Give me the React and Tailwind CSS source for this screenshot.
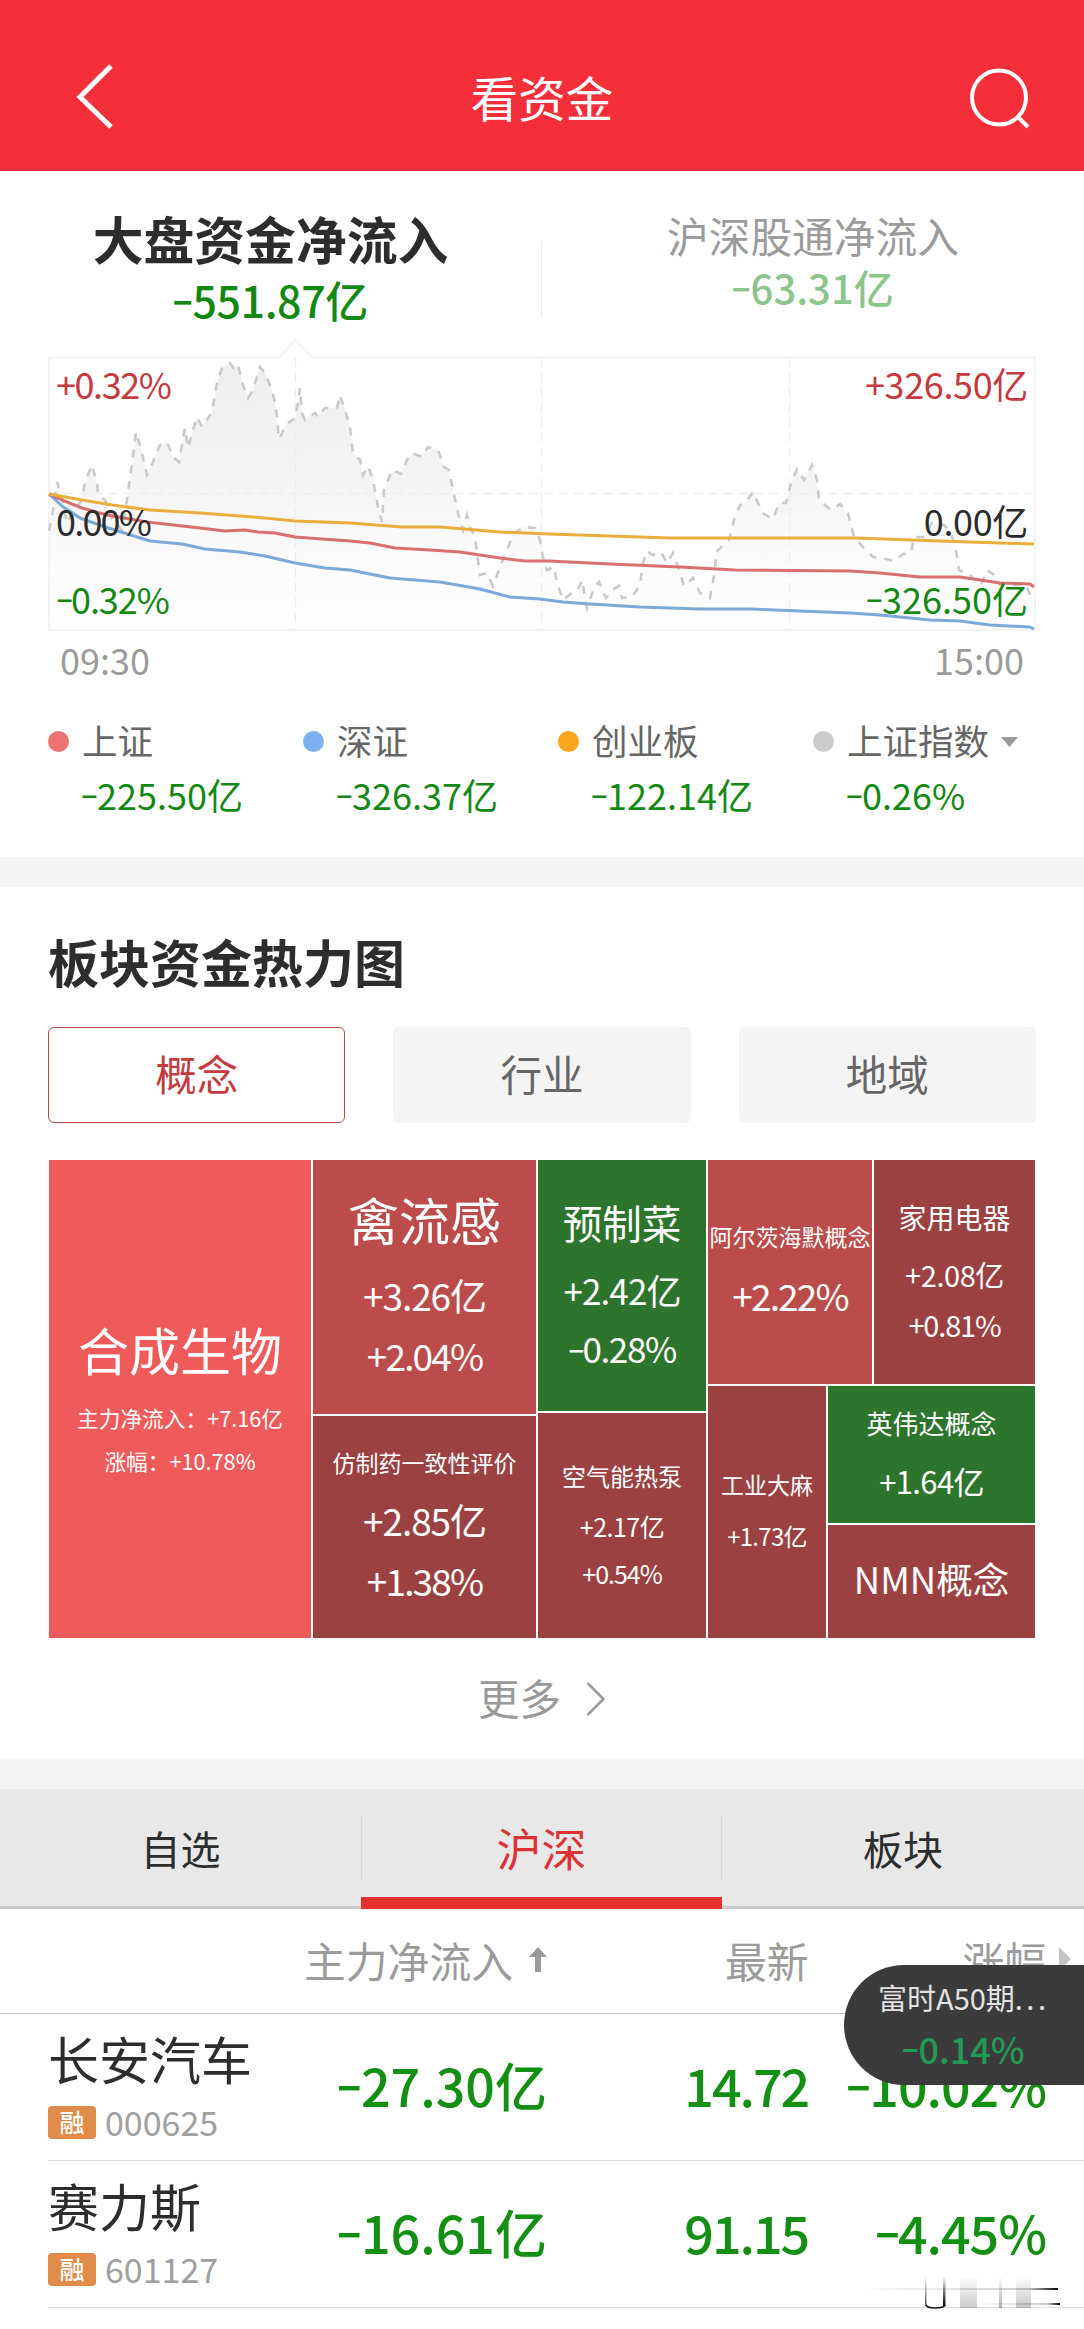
import { clsx } from "clsx";

const INDEX_LINE =
  "49,531 53,510 57,482 62,497 67,523 73,512 82,500 85,482 92,465 97,483 98,495 105,500 113,520 122,530 127,500 132,463 136,432 142,453 147,475 153,462 160,445 167,442 173,457 179,462 185,428 188,448 193,430 197,417 202,427 212,412 217,383 222,368 230,363 234,369 238,365 243,385 248,398 253,390 260,367 265,373 272,390 276,407 279,439 286,425 295,418 298,402 300,388 302,413 305,420 315,413 318,417 325,408 337,408 340,395 345,410 350,427 353,453 360,460 363,475 368,466 373,480 378,507 382,522 384,490 392,470 401,474 407,460 412,453 422,457 428,447 438,450 444,467 449,470 453,490 458,513 463,530 467,515 470,527 475,537 478,560 480,575 487,573 493,586 500,567 507,550 513,535 523,527 535,528 540,540 543,557 547,570 554,567 557,583 563,600 573,592 578,590 582,580 587,608 594,588 599,582 606,598 615,588 619,586 622,598 632,597 640,585 643,563 647,551 653,555 661,552 667,563 673,553 679,570 684,586 693,578 700,593 710,598 715,570 716,552 729,540 734,520 740,505 745,503 753,492 758,503 764,514 773,519 779,503 786,503 791,483 797,469 804,480 812,465 817,480 819,500 831,510 840,504 848,513 854,537 863,547 873,557 882,558 894,561 903,554 911,553 914,537 923,537 932,523 944,525 951,533 956,550 959,570 970,575 981,585 987,570 994,575 1000,585 1026,585 1033,602";

const YELLOW_LINE =
  "49,494 82,500 112,505 150,510 200,513 253,517 295,521 350,523 402,527 440,527 500,532 549,534 610,536 670,538 740,538 855,538 940,541 1000,543 1034,544";
const RED_LINE =
  "49,494 62,500 82,508 107,515 147,522 200,528 225,531 245,530 258,532 275,533 295,537 350,541 370,543 395,548 430,550 460,552 500,558 525,561 549,561 610,564 680,567 735,570 850,571 880,573 920,577 960,577 1000,583 1030,584 1034,587";
const BLUE_LINE =
  "49,494 62,506 80,518 105,527 150,541 182,544 205,549 240,552 265,556 295,563 325,568 350,570 390,578 440,582 480,589 510,597 540,599 563,602 590,604 640,607 700,609 750,609 800,611 850,613 880,615 930,620 960,621 990,625 1030,627 1034,629";

const legend = [
  { name: "上证", value: "-225.50亿", dot: "bg-[#ee7272]" },
  { name: "深证", value: "-326.37亿", dot: "bg-[#7cb0ee]" },
  { name: "创业板", value: "-122.14亿", dot: "bg-[#faa61e]" },
  { name: "上证指数", value: "-0.26%", dot: "bg-[#cccccc]", arrow: true },
];

const stocks = [
  { name: "长安汽车", code: "000625", flow: "-27.30亿", price: "14.72", change: "-10.02%" },
  { name: "赛力斯", code: "601127", flow: "-16.61亿", price: "91.15", change: "-4.45%" },
];

// Negative number with a wide minus, raised to the middle of the digits
function Neg({ children }) {
  return (
    <>
      <span className="mx-[0.05em] inline-block -translate-y-[0.07em] scale-x-150">-</span>
      {children.slice(1)}
    </>
  );
}

function Cell({ className, children }) {
  return (
    <div className={clsx("flex flex-col items-center justify-center whitespace-nowrap text-white", className)}>
      {children}
    </div>
  );
}

function FundChart() {
  return (
    <div className="relative ml-12 h-[296px] w-[988px]">
      <svg className="block" width="988" height="296" viewBox="48 336 988 296" fill="none">
        <defs>
          <linearGradient id="area" gradientUnits="userSpaceOnUse" x1="0" y1="360" x2="0" y2="630">
            <stop offset="0" stopColor="#eeeeee" />
            <stop offset="0.5" stopColor="#f5f5f5" />
            <stop offset="0.75" stopColor="#fbfbfb" />
            <stop offset="1" stopColor="#fefefe" />
          </linearGradient>
        </defs>
        <polygon points={`49,630 ${INDEX_LINE} 1033,630`} fill="url(#area)" />
        <path d="M49 357.500H279L295 340L312 357.500H1035V630H49Z" stroke="#f0f0f0" strokeWidth="1.500" />
        <path d="M49 493.500H1035M295.500 358V630M541.500 358V630M789.500 358V630" stroke="#ededed" strokeWidth="1.300" strokeDasharray="9 6" />
        <polyline points={INDEX_LINE} stroke="#cacaca" strokeWidth="2.600" strokeDasharray="8 8" />
        <polyline points={BLUE_LINE} stroke="#7ba9da" strokeWidth="3" strokeLinejoin="round" />
        <polyline points={RED_LINE} stroke="#d86f70" strokeWidth="3" strokeLinejoin="round" />
        <polyline points={YELLOW_LINE} stroke="#eaae3c" strokeWidth="3" strokeLinejoin="round" />
      </svg>
      <div className="absolute inset-x-2 top-[28px] flex justify-between text-[36px] leading-[38px] text-[#c53a40]">
        <span className="tracking-[-0.04em]">+0.32%</span>
        <span className="tracking-[-0.01em]">+326.50亿</span>
      </div>
      <div className="absolute inset-x-2 top-[165px] flex justify-between text-[36px] leading-[38px] text-[#2b2b2b]">
        <span className="tracking-[-0.05em]">0.00%</span>
        <span className="tracking-[-0.01em]">0.00亿</span>
      </div>
      <div className="absolute inset-x-2 top-[243px] flex justify-between text-[36px] leading-[38px] text-[#138913]">
        <span className="tracking-[-0.03em]"><Neg>-0.32%</Neg></span>
        <span><Neg>-326.50亿</Neg></span>
      </div>
    </div>
  );
}

function HeatMap() {
  return (
    <div className="mx-[49px] flex h-[478px] gap-[2px]">
      <Cell className="w-[262px] bg-[#ef5b5b] pb-[14px]">
        <div className="text-[51px] leading-[93px]">合成生物</div>
        <div className="text-[21.7px] leading-[43px]">主力净流入：+7.16亿</div>
        <div className="text-[21.7px] leading-[43px]">涨幅：+10.78%</div>
      </Cell>

      <div className="flex w-[223px] flex-col gap-[2px]">
        <Cell className="h-[254px] bg-[#bc4b4b] pb-4">
          <div className="text-[51px] leading-[92px]">禽流感</div>
          <div className="text-[37px] leading-[60px] tracking-[-0.03em]">+3.26亿</div>
          <div className="text-[37px] leading-[60px] tracking-[-0.05em]">+2.04%</div>
        </Cell>
        <Cell className="flex-1 bg-[#9c4141] pb-[10px]">
          <div className="text-[23px] leading-[56px]">仿制药一致性评价</div>
          <div className="text-[37px] leading-[60px] tracking-[-0.03em]">+2.85亿</div>
          <div className="text-[37px] leading-[60px] tracking-[-0.05em]">+1.38%</div>
        </Cell>
      </div>

      <div className="flex w-[168px] flex-col gap-[2px]">
        <Cell className="h-[251px] bg-[#2d752d] pb-[11px]">
          <div className="text-[39.5px] leading-[78px]">预制菜</div>
          <div className="text-[35px] leading-[58px] tracking-[-0.025em]">+2.42亿</div>
          <div className="text-[35px] leading-[58px] tracking-[-0.04em]"><Neg>-0.28%</Neg></div>
        </Cell>
        <Cell className="flex-1 bg-[#9c4141] pb-[7px]">
          <div className="text-[24px] leading-[55px]">空气能热泵</div>
          <div className="text-[25px] leading-[47px] tracking-[-0.02em]">+2.17亿</div>
          <div className="text-[25px] leading-[47px] tracking-[-0.04em]">+0.54%</div>
        </Cell>
      </div>

      <div className="flex flex-1 flex-col gap-[2px]">
        <div className="flex h-[224px] gap-[2px]">
          <Cell className="w-[164px] bg-[#bc4b4b] pb-3">
            <div className="text-[23px] leading-[59px]">阿尔茨海默概念</div>
            <div className="text-[37px] leading-[59px] tracking-[-0.05em]">+2.22%</div>
          </Cell>
          <Cell className="flex-1 bg-[#9c4141] pb-[10px]">
            <div className="text-[28px] leading-[64px]">家用电器</div>
            <div className="text-[29px] leading-[50px] tracking-[-0.015em]">+2.08亿</div>
            <div className="text-[29px] leading-[50px] tracking-[-0.04em]">+0.81%</div>
          </Cell>
        </div>
        <div className="flex flex-1 gap-[2px]">
          <Cell className="w-[118px] bg-[#9c4141] pb-1">
            <div className="text-[23px] leading-[51px]">工业大麻</div>
            <div className="text-[24px] leading-[51px] tracking-[-0.03em]">+1.73亿</div>
          </Cell>
          <div className="flex flex-1 flex-col gap-[2px]">
            <Cell className="h-[137px] bg-[#2d752d] pb-[6px]">
              <div className="text-[26px] leading-[58px]">英伟达概念</div>
              <div className="text-[31px] leading-[58px] tracking-[-0.02em]">+1.64亿</div>
            </Cell>
            <Cell className="flex-1 bg-[#9c4141] pb-[5px]">
              <div className="text-[36.5px] leading-none">NMN概念</div>
            </Cell>
          </div>
        </div>
      </div>
    </div>
  );
}

function StockRow({ stock }) {
  return (
    <div className="ml-12 flex h-[147px] border-b-[1.5px] border-[#dedede]">
      <div className="w-[264px] pt-[16px]">
        <div className="text-[51px] leading-[56px] text-[#2d2d2d]">{stock.name}</div>
        <div className="mt-[20px] flex h-[33px] items-center gap-[9px]">
          <span className="flex h-[33px] w-12 items-center justify-center rounded bg-[#e08b4a] pb-[2px] text-[25px] font-medium leading-none text-white">
            融
          </span>
          <span className="pb-[2px] text-[34px] leading-none text-[#a0a0a0]">{stock.code}</span>
        </div>
      </div>
      <div className="flex flex-1 pt-[43px] text-right text-[52px] font-medium leading-[56px] text-[#138f13]">
        <div className="w-[235px]"><Neg>{stock.flow}</Neg></div>
        <div className="w-[261px] tracking-[-0.04em]">{stock.price}</div>
        <div className="w-[238px] tracking-[-0.02em]"><Neg>{stock.change}</Neg></div>
      </div>
    </div>
  );
}

export default function App() {
  return (
    <div className="relative h-[2329px] w-[1084px] overflow-hidden bg-white font-['Noto_Sans_CJK_SC',sans-serif]">
      {/* Header */}
      <header className="flex h-[171px] items-start justify-between bg-[#f42f39] pl-[75px] pr-[53px] pt-[62px] text-white">
        <svg width="40" height="68" viewBox="0 0 40 68" fill="none" stroke="currentColor" strokeWidth="5">
          <path d="M36 4L5 35L36 65" />
        </svg>
        <h1 className="mt-[8px] text-[47.5px] leading-[54px]">看资金</h1>
        <svg width="62" height="68" viewBox="0 0 62 68" fill="none" stroke="currentColor" strokeWidth="4">
          <circle cx="30" cy="35.500" r="27" />
          <path d="M49 55L59 65" />
        </svg>
      </header>

      {/* Net inflow summary */}
      <section className="h-[686px]">
        <div className="flex h-[165px] items-start text-center">
          <div className="w-[541px] pt-[38px]">
            <div className="text-[50.8px] font-bold leading-[58px] text-[#2d2d2d]">大盘资金净流入</div>
            <div className="mt-[7px] text-[43px] font-medium leading-[50px] tracking-[-0.01em] text-[#138913]"><Neg>-551.87亿</Neg></div>
          </div>
          <div className="mt-[70px] h-[76px] w-px bg-[#ececec]" />
          <div className="flex-1 pt-[39px]">
            <div className="text-[41.7px] leading-[50px] text-[#9b9b9b]">沪深股通净流入</div>
            <div className="mt-[3px] text-[40px] font-medium leading-[48px] text-[#8cc58c]"><Neg>-63.31亿</Neg></div>
          </div>
        </div>
        <FundChart />
        <div className="mx-[60px] mt-[7px] flex justify-between text-[36px] leading-[40px] text-[#9b9b9b]">
          <span>09:30</span>
          <span>15:00</span>
        </div>
        <div className="ml-12 mt-[40px] grid grid-cols-[255px_255px_255px_1fr]">
          {legend.map((item) => (
            <div key={item.name}>
              <div className="flex items-center text-[35.5px] leading-[50px] text-[#666]">
                <i className={clsx("mr-[13px] size-[21px] -translate-y-px rounded-full", item.dot)} />
                <span className="-mt-1">{item.name}</span>
                {item.arrow && (
                  <svg className="ml-3" width="17" height="10" viewBox="0 0 17 10" fill="#999">
                    <path d="M0 0H17L8.500 10Z" />
                  </svg>
                )}
              </div>
              <div className="pl-[33px] pt-[4px] text-[36px] leading-[50px] text-[#138913]"><Neg>{item.value}</Neg></div>
            </div>
          ))}
        </div>
      </section>

      <div className="h-[30px] bg-[#f4f4f4]" />

      {/* Sector heat map */}
      <section className="h-[872px]">
        <h2 className="pl-12 pt-[45px] text-[51px] font-bold leading-[58px] text-[#2d2d2d]">板块资金热力图</h2>
        <div className="mx-12 mb-[37px] mt-[37px] grid h-24 grid-cols-3 gap-12 text-center text-[41.5px] leading-[90px]">
          <div className="rounded-md border-[1.5px] border-[#b9484c] text-[#c53a40]">概念</div>
          <div className="rounded-md bg-[#f4f4f4] pt-px text-[#666]">行业</div>
          <div className="rounded-md bg-[#f4f4f4] pt-px text-[#666]">地域</div>
        </div>
        <HeatMap />
        <div className="mt-[32px] flex items-center justify-center gap-[25px] text-[41.5px] leading-[54px] text-[#999]">
          更多
          <svg className="mt-1" width="20" height="36" viewBox="0 0 20 36" fill="none" stroke="currentColor" strokeWidth="2.500">
            <path d="M1.500 2L17.500 18L1.500 34" />
          </svg>
        </div>
      </section>

      <div className="h-[30px] bg-[#f4f4f4]" />

      {/* Market tabs */}
      <nav className="grid h-[120px] grid-cols-[361px_361px_1fr] border-b-[3px] border-[#c9c9c9] bg-[#e8e8e8] text-center text-[40px] leading-[118px] text-[#2d2d2d]">
        <div>自选</div>
        <div className="relative text-[45px] text-[#dc3236]">
          <i className="absolute left-0 top-[27px] h-[65px] w-px bg-[#dadada]" />
          <i className="absolute right-0 top-[27px] h-[65px] w-px bg-[#dadada]" />
          <i className="absolute inset-x-0 top-[108px] h-3 bg-[#e5302f]" />
          沪深
        </div>
        <div>板块</div>
      </nav>

      {/* Stock table */}
      <section>
        <div className="flex h-[105px] items-center border-b-[1.5px] border-[#c4c4c4] text-[41.8px] leading-none text-[#9b9b9b]">
          <div className="ml-[304px]">主力净流入</div>
          <svg className="-mt-1 ml-[15px]" width="20" height="25" viewBox="0 0 20 25" fill="#999">
            <path d="M10 0L19 10H13V25H7V10H1Z" />
          </svg>
          <div className="ml-[177px]">最新</div>
          <div className="ml-[154px]">涨幅</div>
          <svg className="-mt-1 ml-[13px]" width="12" height="24" viewBox="0 0 12 24" fill="#c4c4c4">
            <path d="M0 0L12 12L0 24Z" />
          </svg>
        </div>
        {stocks.map((stock) => (
          <StockRow key={stock.code} stock={stock} />
        ))}
      </section>

      {/* Floating futures quote */}
      <div className="absolute right-0 top-[1965px] h-[120px] w-[240px] whitespace-nowrap rounded-l-full bg-[#3b3b3b] pl-[34px] pt-[12px]">
        <div className="text-[29px] leading-[40px] text-[#e2e2e2]">
          富时A50期<span className="tracking-[0.12em]">...</span>
        </div>
        <div className="pl-6 pt-[8px] text-[36px] font-medium leading-[46px] text-[#229a57]"><Neg>-0.14%</Neg></div>
      </div>

      {/* Faded stamp over the last divider */}
      <svg className="absolute left-[856px] top-[2272px]" width="204" height="38" viewBox="0 0 204 38" fill="none">
        <defs>
          <linearGradient id="fadeDown" x1="0" y1="0" x2="0" y2="1">
            <stop offset="0" stopColor="#000" stopOpacity="0" />
            <stop offset="1" stopColor="#000" stopOpacity="1" />
          </linearGradient>
          <linearGradient id="fadeRight" x1="0" y1="0" x2="1" y2="0">
            <stop offset="0" stopColor="#000" stopOpacity="0" />
            <stop offset="0.85" stopColor="#000" stopOpacity="0.2" />
            <stop offset="1" stopColor="#000" stopOpacity="1" />
          </linearGradient>
        </defs>
        <rect x="69" y="4" width="1.500" height="30" fill="url(#fadeDown)" opacity="0.7" />
        <rect x="87" y="4" width="2.500" height="30" fill="url(#fadeDown)" />
        <path d="M70 33Q71 36 79 36Q88 36 89 33" stroke="#111" strokeWidth="1.500" />
        <rect x="104" y="4" width="17" height="32" fill="url(#fadeDown)" opacity="0.2" />
        <rect x="143" y="4" width="3" height="32" fill="url(#fadeDown)" opacity="0.3" />
        <rect x="160" y="4" width="15" height="32" fill="url(#fadeDown)" opacity="0.22" />
        <rect x="4" y="16" width="198" height="2" fill="url(#fadeRight)" />
        <rect x="120" y="31" width="84" height="2" fill="url(#fadeRight)" />
      </svg>
    </div>
  );
}
